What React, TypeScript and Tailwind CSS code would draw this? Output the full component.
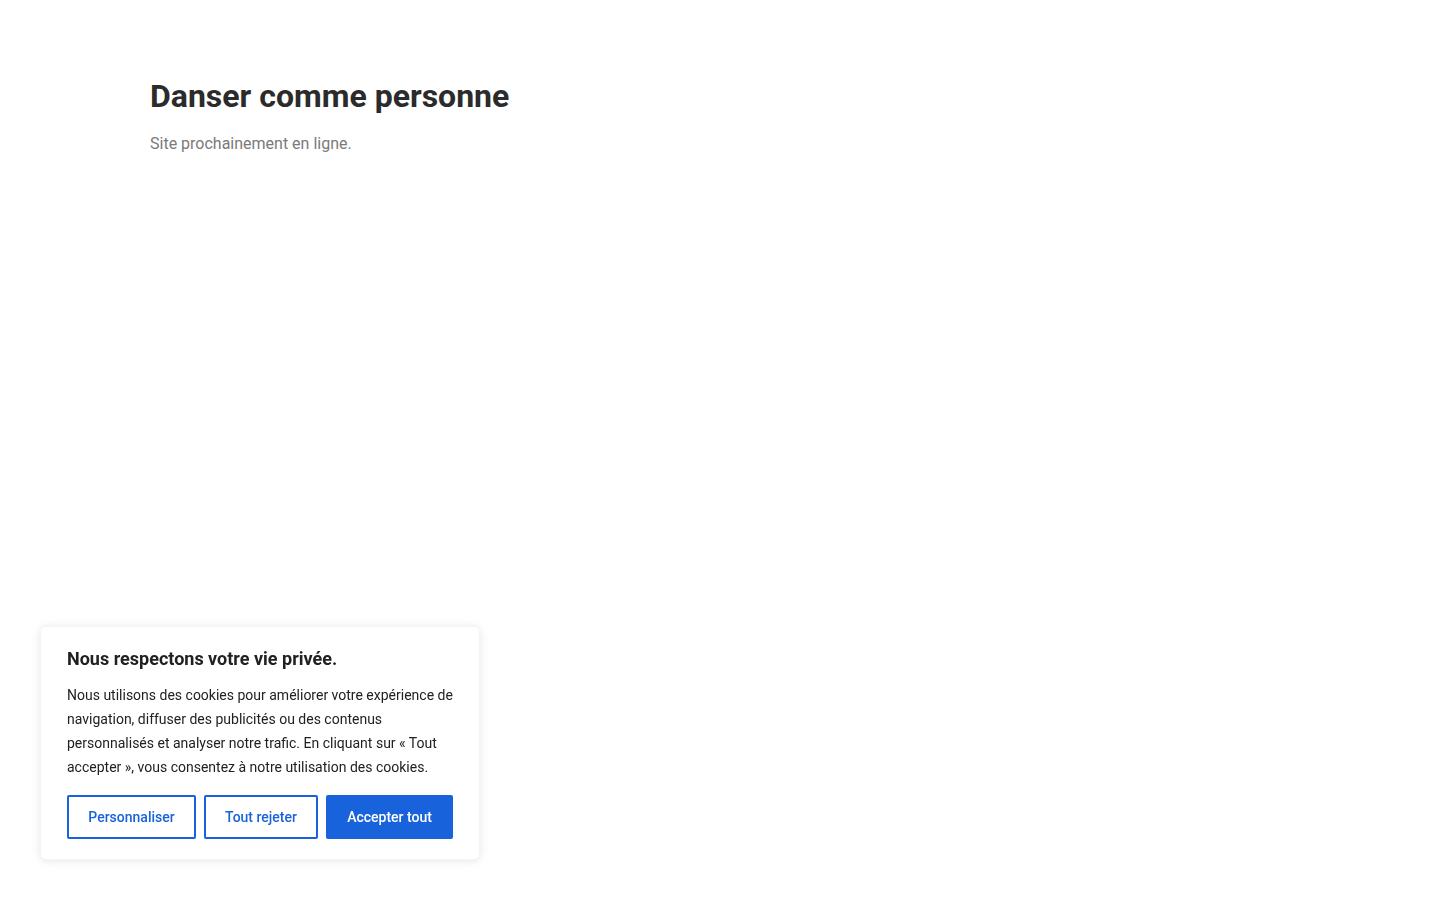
export default function App() {
  return (
    <div className="min-h-[900px] bg-white" style={{ fontFamily: "Roboto, 'Liberation Sans', sans-serif" }}>
      <div className="px-[150px] pt-[76px]">
        <h1 className="text-[32px] leading-[40px] font-bold text-[#2b2b2b]">Danser comme personne</h1>
        <p className="mt-[16px] text-[16px] leading-[24px] text-[#7a7a7a]">Site prochainement en ligne.</p>
      </div>
      <div className="fixed left-[40px] bottom-[40px] w-[440px] bg-white rounded-[6px] shadow-[0_1px_10px_rgba(0,0,0,0.1)] border border-[#f4f4f4] px-[26px] pt-[20px] pb-[20px]">
        <h2 className="text-[18px] leading-[24px] font-bold text-[#212121]">Nous respectons votre vie privée.</h2>
        <p className="mt-[12px] text-[14px] leading-[24px] text-[#212121]">
          Nous utilisons des cookies pour améliorer votre expérience de navigation, diffuser des publicités ou des contenus personnalisés et analyser notre trafic. En cliquant sur « Tout accepter », vous consentez à notre utilisation des cookies.
        </p>
        <div className="mt-[16px] flex gap-[8px]">
          <button className="h-[44px] w-[129px] border-2 border-[#1863dc] rounded-[2px] text-[14px] font-medium text-[#1863dc] bg-transparent">Personnaliser</button>
          <button className="h-[44px] w-[114px] border-2 border-[#1863dc] rounded-[2px] text-[14px] font-medium text-[#1863dc] bg-transparent">Tout rejeter</button>
          <button className="h-[44px] w-[127px] border-2 border-[#1863dc] rounded-[2px] text-[14px] font-medium text-white bg-[#1863dc]">Accepter tout</button>
        </div>
      </div>
    </div>
  );
}
